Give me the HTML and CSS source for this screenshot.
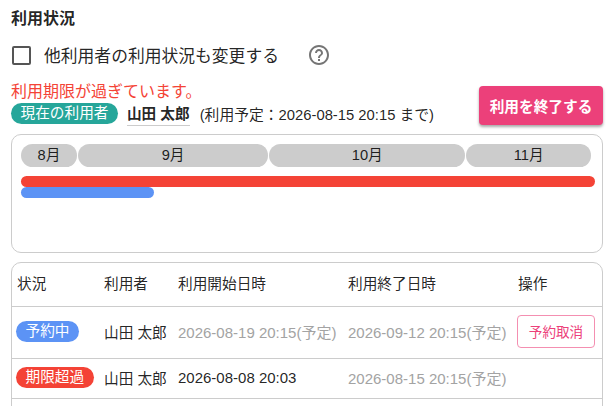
FILE: index.html
```html
<!DOCTYPE html>
<html lang="ja">
<head>
    <meta charset="UTF-8">
    <title>利用状況</title>
    <link rel="stylesheet" href="styles.css">
</head>
<body>
    <div class="page">
        <h2 class="title">利用状況</h2>

        <!-- Other users option -->
        <div class="option-row">
            <span class="checkbox"></span>
            <span class="option-label">他利用者の利用状況も変更する</span>
            <svg class="help-icon" width="24" height="24" viewBox="0 0 24 24">
                <path d="M11 18h2v-2h-2v2zm1-16C6.48 2 2 6.48 2 12s4.48 10 10 10 10-4.48 10-10S17.52 2 12 2zm0 18c-4.41 0-8-3.59-8-8s3.59-8 8-8 8 3.59 8 8-3.59 8-8 8zm0-14c-2.21 0-4 1.79-4 4h2c0-1.1.9-2 2-2s2 .9 2 2c0 2-3 1.75-3 5h2c0-2.25 3-2.5 3-5 0-2.21-1.79-4-4-4z"/>
            </svg>
        </div>

        <!-- Current user -->
        <div class="current-row">
            <div class="current-info">
                <div class="error-text">利用期限が過ぎています。</div>
                <div class="user-line">
                    <span class="chip chip-teal">現在の利用者</span>
                    <span class="user-name">山田 太郎</span>
                    <span class="user-note">(利用予定：2026-08-15 20:15 まで)</span>
                </div>
            </div>
            <button class="end-btn">利用を終了する</button>
        </div>

        <!-- Timeline -->
        <div class="timeline">
            <div class="months">
                <div class="month month-aug">8月</div>
                <div class="month month-sep">9月</div>
                <div class="month month-oct">10月</div>
                <div class="month month-nov">11月</div>
            </div>
            <div class="bar bar-red"></div>
            <div class="bar bar-blue"></div>
        </div>

        <!-- Reservations -->
        <div class="table-box">
            <table class="usage-table">
                <thead>
                    <tr>
                        <th class="col-status">状況</th>
                        <th class="col-user">利用者</th>
                        <th class="col-start">利用開始日時</th>
                        <th class="col-end">利用終了日時</th>
                        <th>操作</th>
                    </tr>
                </thead>
                <tbody>
                    <tr class="row-tall">
                        <td><span class="chip chip-blue">予約中</span></td>
                        <td>山田 太郎</td>
                        <td class="date planned">2026-08-19 20:15(予定)</td>
                        <td class="date planned">2026-09-12 20:15(予定)</td>
                        <td><button class="cancel-btn">予約取消</button></td>
                    </tr>
                    <tr class="row-short">
                        <td><span class="chip chip-red">期限超過</span></td>
                        <td>山田 太郎</td>
                        <td class="date">2026-08-08 20:03</td>
                        <td class="date planned">2026-08-15 20:15(予定)</td>
                        <td></td>
                    </tr>
                </tbody>
            </table>
        </div>
    </div>
</body>
</html>
```

FILE: styles.css
```css
html, body {
    height: 100%;
}

body {
    margin: 0;
    background-color: #fff;
    color: rgba(0, 0, 0, 0.87);
    font-family: "Liberation Sans", "Noto Sans CJK JP", sans-serif;
    overflow: hidden;
}

.page {
    padding: 9px 7px 0 11px;
}

.title {
    margin: 0;
    font-size: 16px;
    line-height: 20px;
    font-weight: 700;
}

.option-row {
    display: flex;
    align-items: center;
    height: 24px;
    margin-top: 14px;
}

.checkbox {
    width: 15px;
    height: 15px;
    margin-left: 1px;
    border: 2px solid #555;
    border-radius: 2px;
}

.option-label {
    margin-left: 13px;
    font-size: 16.8px;
}

.help-icon {
    margin-left: 28px;
    fill: #757575;
}

.current-row {
    display: flex;
    justify-content: space-between;
    align-items: flex-end;
    margin-top: 15px;
}

.error-text {
    font-size: 16px;
    line-height: 20px;
    color: #f44336;
}

.user-line {
    display: flex;
    align-items: center;
    height: 23px;
}

.chip {
    display: inline-block;
    padding: 0 9.5px;
    border-radius: 11px;
    color: #fff;
    font-size: 14.67px;
    line-height: 21px;
    white-space: nowrap;
}

.chip-teal {
    background-color: #26a69a;
}

.chip-blue {
    background-color: #5c93f5;
}

.chip-red {
    background-color: #f44336;
}

.user-name {
    margin-left: 9px;
    padding-bottom: 2px;
    border-bottom: 1px solid #ccc;
    font-size: 14.67px;
    font-weight: 700;
}

.user-note {
    margin-left: 10px;
    font-size: 14.8px;
}

.end-btn {
    width: 124px;
    height: 39px;
    border: none;
    border-radius: 4px;
    background-color: #ec407a;
    color: #fff;
    font-family: inherit;
    font-size: 14.67px;
    font-weight: 700;
    box-shadow: 0 2px 3px rgba(0, 0, 0, 0.35);
}

.timeline {
    box-sizing: border-box;
    height: 119px;
    margin-top: 9px;
    padding: 9px 9px 0;
    border: 1px solid #ccc;
    border-radius: 10px;
}

.months {
    display: flex;
    margin-bottom: 9px;
}

.month {
    box-sizing: border-box;
    height: 23px;
    border-radius: 12px;
    background-color: #ccc;
    border-right: 1px solid #fff;
    font-size: 14.67px;
    line-height: 22px;
    text-align: center;
}

.month-aug {
    width: 57px;
}

.month-sep {
    width: 191.25px;
}

.month-oct {
    width: 197px;
}

.month-nov {
    width: 126px;
}

.bar {
    height: 11px;
    border-radius: 6px;
}

.bar-red {
    background-color: #f44336;
    width: 574px;
}

.bar-blue {
    background-color: #5c93f5;
    width: 133px;
}

.table-box {
    box-sizing: border-box;
    height: 160px;
    margin-top: 9px;
    border: 1px solid #ccc;
    border-radius: 10px;
}

.usage-table {
    width: 100%;
    border-collapse: collapse;
    table-layout: fixed;
    font-size: 14.67px;
}

.usage-table th {
    height: 39px;
    padding: 0 0 4px 5px;
    border-bottom: 1px solid #ccc;
    font-weight: 400;
    text-align: left;
}

.usage-table td {
    padding: 0 0 3px 5px;
    border-bottom: 1px solid #ccc;
    white-space: nowrap;
}

.usage-table td:first-child {
    padding-left: 4px;
}

.usage-table td:last-child {
    padding-left: 4px;
}

.col-status {
    width: 82px;
}

.col-user {
    width: 69px;
}

.col-start,
.col-end {
    width: 165px;
}

.row-tall {
    height: 52px;
}

.row-short {
    height: 40px;
}

.usage-table .date {
    font-size: 15px;
}

.planned {
    color: #a3a3a3;
}

.cancel-btn {
    display: block;
    width: 78px;
    height: 33px;
    padding: 0;
    border: 1px solid #f48fb1;
    border-radius: 4px;
    background-color: #fff;
    color: #ec407a;
    font-family: inherit;
    font-size: 13.6px;
}
```
